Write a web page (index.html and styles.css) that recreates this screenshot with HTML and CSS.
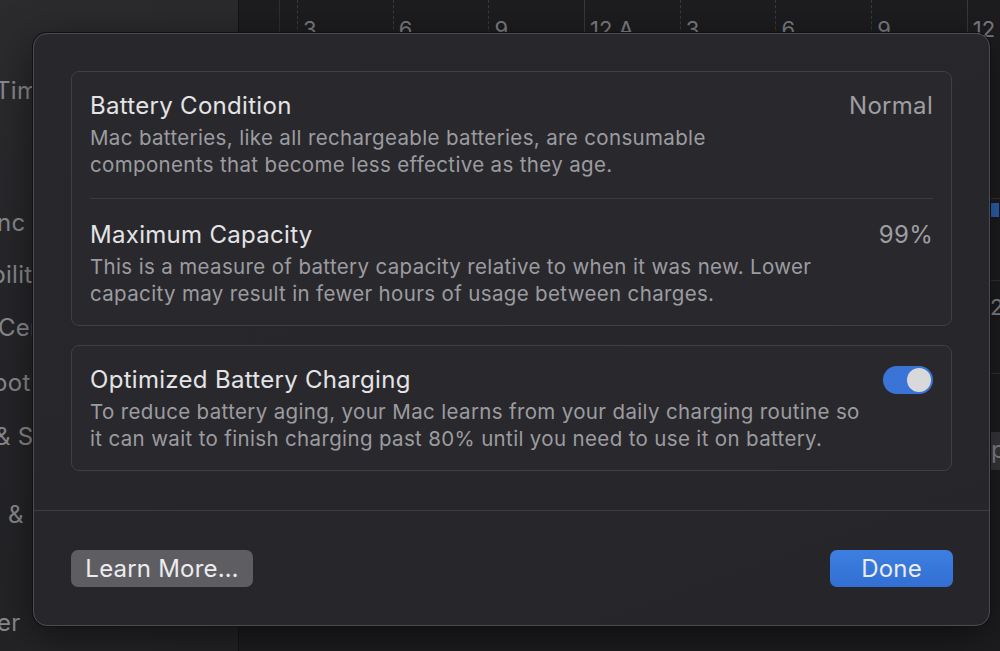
FILE: index.html
```html
<!DOCTYPE html>
<html lang="en">
<head>
  <meta charset="UTF-8" />
  <title>Battery Health</title>
  <link rel="stylesheet" href="styles.css">
</head>
<body>
  <div class="window">
    <div class="sidebar">
      <div class="side-item s-tim">Tim</div>
      <div class="side-item s-nc">nc</div>
      <div class="side-item s-bil">bilit</div>
      <div class="side-item s-cen">Cer</div>
      <div class="side-item s-blu">ootl</div>
      <div class="side-item s-snd">&amp; S</div>
      <div class="side-item s-amp">&amp;</div>
      <div class="side-item s-er">er</div>
    </div>
    <div class="content">
      <div class="chart">
        <div class="tick first"></div>
        <div class="tick"><span>3</span></div>
        <div class="tick"><span>6</span></div>
        <div class="tick"><span>9</span></div>
        <div class="tick solid"><span>12 A</span></div>
        <div class="tick"><span>3</span></div>
        <div class="tick"><span>6</span></div>
        <div class="tick"><span>9</span></div>
        <div class="tick solid"><span>12</span></div>
      </div>
      <div class="edge">
        <div class="edge-line l1"></div>
        <div class="edge-blue"></div>
        <div class="edge-line l2"></div>
        <div class="edge-num">2</div>
        <div class="edge-line l3"></div>
        <div class="edge-btn">p</div>
      </div>
    </div>
  </div>

  <div class="sheet">
    <div class="sheet-body">
      <div class="group">
        <div class="row">
          <div class="row-head">
            <div class="row-title">Battery Condition</div>
            <div class="row-value">Normal</div>
          </div>
          <p class="row-desc">Mac batteries, like all rechargeable batteries, are consumable<br>components that become less effective as they age.</p>
        </div>
        <div class="row">
          <div class="row-head">
            <div class="row-title">Maximum Capacity</div>
            <div class="row-value">99%</div>
          </div>
          <p class="row-desc">This is a measure of battery capacity relative to when it was new. Lower<br>capacity may result in fewer hours of usage between charges.</p>
        </div>
      </div>

      <div class="group">
        <div class="row">
          <div class="row-head">
            <div class="row-title">Optimized Battery Charging</div>
            <div class="toggle"><div class="knob"></div></div>
          </div>
          <p class="row-desc">To reduce battery aging, your Mac learns from your daily charging routine so<br>it can wait to finish charging past 80% until you need to use it on battery.</p>
        </div>
      </div>
    </div>

    <div class="sheet-foot">
      <button class="btn btn-gray">Learn More…</button>
      <button class="btn btn-blue">Done</button>
    </div>
  </div>
</body>
</html>
```

FILE: styles.css
```css
html, body {
  margin: 0;
  padding: 0;
  height: 100%;
}
body {
  font-family: Inter, "Noto Sans", sans-serif;
  background: #1b1b1d;
  overflow: hidden;
  position: relative;
}
.window {
  display: flex;
  height: 651px;
}
.sidebar {
  flex: none;
  width: 238px;
  border-right: 1px solid #141416;
  background: linear-gradient(160deg, #2c2c2f 0%, #26262a 40%, #232326 100%);
  position: relative;
  color: #8a8a8e;
  font-size: 24px;
  letter-spacing: 0.3px;
}
.side-item {
  position: absolute;
  left: 0;
  line-height: 28px;
  white-space: nowrap;
}
.s-tim { top: 77px; left: -5px; }
.s-nc { top: 209px; left: -3px; }
.s-bil { top: 261px; left: -9px; }
.s-cen { top: 314px; left: -2px; }
.s-blu { top: 369px; left: -7px; }
.s-snd { top: 423px; left: -5px; }
.s-amp { top: 501px; left: 8px; }
.s-er { top: 609px; left: -3px; }

.content {
  flex: 1;
  min-width: 0;
  overflow: hidden;
  position: relative;
  background: #1d1d1f;
}
.chart {
  display: flex;
  height: 40px;
  padding-left: 40px;
}
.tick {
  width: 94.7px;
  flex: none;
  border-left: 1px dashed #3a3a3d;
  position: relative;
}
.tick.first {
  width: 17px;
  border-left: 1px solid #2e2e31;
}
.tick.solid {
  border-left: 1px solid #38383b;
}
.tick span {
  position: absolute;
  left: 5px;
  top: 16px;
  font-size: 22px;
  color: #7c7c80;
  white-space: nowrap;
}
.edge {
  position: absolute;
  left: 752px;
  top: 0;
  width: 20px;
  height: 651px;
}
.edge-line {
  position: absolute;
  left: 0;
  width: 20px;
  height: 1px;
  background: #343437;
}
.l1 { top: 198px; }
.l2 { top: 280px; }
.l3 { top: 373px; }
.edge-blue {
  position: absolute;
  left: 0;
  top: 203px;
  width: 8px;
  height: 14px;
  background: #2f62b8;
}
.edge-num {
  position: absolute;
  left: -1px;
  top: 294px;
  font-size: 22px;
  color: #8a8a8e;
}
.edge-btn {
  position: absolute;
  left: -4px;
  top: 432px;
  width: 20px;
  height: 38px;
  background: #39393c;
  color: #8a8a8e;
  font-size: 24px;
  line-height: 36px;
  padding-left: 4px;
}

.sheet {
  position: absolute;
  left: 33px;
  top: 33px;
  width: 955px;
  height: 591px;
  background: linear-gradient(160deg, #28282c 0%, #26262a 100%);
  border: 1px solid #4c4c50;
  border-radius: 14px;
  box-shadow: 0 0 0 1px #111113, 0 10px 40px rgba(0, 0, 0, 0.5);
  display: flex;
  flex-direction: column;
  color: #e2e2e4;
}
.sheet-body {
  padding: 37px 37px 0 37px;
  display: flex;
  flex-direction: column;
  gap: 19px;
  height: 477px;
  box-sizing: border-box;
  border-bottom: 1px solid #3e3e42;
}
.group {
  border: 1px solid #404044;
  border-radius: 8px;
  background: #29292d;
  padding: 0 18px;
}
.row {
  padding: 19px 0 20px;
}
.row + .row {
  border-top: 1px solid #3c3c40;
  padding-top: 21px;
  padding-bottom: 18px;
}
.group:last-child .row {
  padding-bottom: 18px;
}
.row-head {
  display: flex;
  justify-content: space-between;
  align-items: center;
}
.row-title {
  font-size: 24px;
  line-height: 30px;
  letter-spacing: 0.3px;
  color: #e4e4e6;
}
.row-value {
  font-size: 24px;
  line-height: 30px;
  letter-spacing: 0.3px;
  color: #9e9ea2;
}
.row-desc {
  margin: 3px 0 0;
  font-size: 20.5px;
  line-height: 27px;
  letter-spacing: 0.35px;
  color: #9c9ca0;
}
.toggle {
  width: 50px;
  height: 28px;
  border-radius: 14px;
  background: #3a74d6;
  position: relative;
}
.knob {
  position: absolute;
  right: 2px;
  top: 2px;
  width: 24px;
  height: 24px;
  border-radius: 50%;
  background: #d9d9db;
}
.sheet-foot {
  flex: 1;
  display: flex;
  justify-content: space-between;
  align-items: center;
  padding: 0 36px 0 37px;
}
.btn {
  font-family: inherit;
  font-size: 24px;
  letter-spacing: 0.2px;
  border: none;
  border-radius: 7px;
  height: 37px;
  padding: 0;
  color: #ececee;
}
.btn-gray {
  width: 182px;
  background: #5e5e62;
}
.btn-blue {
  width: 123px;
  background: linear-gradient(#3d7fe0, #336fd4);
}
```
